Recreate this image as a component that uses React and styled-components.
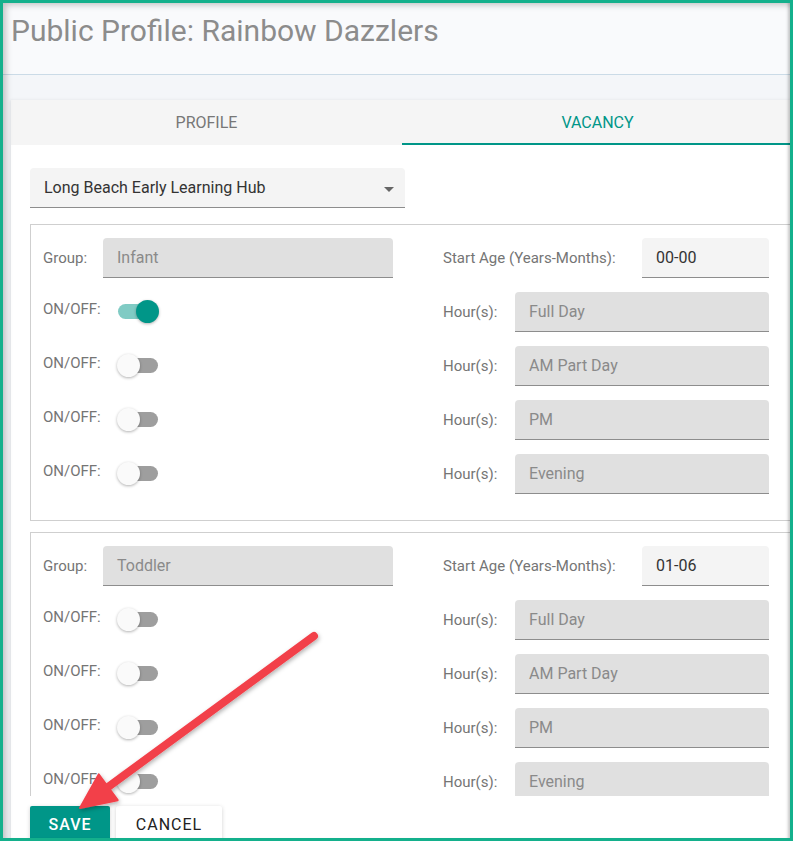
import React from "react";
import styled, { createGlobalStyle } from "styled-components";

const GlobalStyle = createGlobalStyle`
	html, body {
		margin: 0;
		padding: 0;
		background: #ffffff;
	}
	* {
		box-sizing: border-box;
	}
	body {
		font-family: Roboto, "Liberation Sans", Arial, sans-serif;
	}
`;

const Frame = styled.div`
	position: relative;
	width: 793px;
	height: 841px;
	border: 3px solid #14b08c;
	overflow: hidden;
	background: #f4f6f9;

	&::after {
		content: "";
		position: absolute;
		inset: 0;
		pointer-events: none;
		box-shadow: inset 6px 5px 6px -3px rgba(0, 0, 0, 0.22),
			inset -4px 0 3px -2px rgba(0, 0, 0, 0.22);
	}
`;

const Header = styled.header`
	height: 72px;
	padding: 11px 0 0 8px;
	background: #f9fafc;
	border-bottom: 1px solid #cbdbe7;
`;

const Title = styled.h1`
	margin: 0;
	font-size: 30px;
	font-weight: 400;
	color: #8c8c8c;
	line-height: 34px;
	white-space: nowrap;
`;

const Body = styled.div`
	padding: 25px 0 0 8px;
`;

const Card = styled.section`
	width: 782px;
	background: #ffffff;
	box-shadow: -1px 0 3px rgba(0, 0, 0, 0.08);
`;

const Tabs = styled.nav`
	display: grid;
	grid-template-columns: 1fr 1fr;
	height: 45px;
	background: #f5f5f5;
`;

const Tab = styled.div`
	display: flex;
	align-items: center;
	justify-content: center;
	font-size: 16px;
	text-transform: uppercase;
	color: ${(p) => (p.$active ? "#009688" : "#777777")};
	border-bottom: 2px solid ${(p) => (p.$active ? "#009688" : "transparent")};
	padding-top: 2px;
`;

const Scroll = styled.div`
	height: 651px;
	overflow: hidden;
	padding: 23px 0 0 19px;
`;

const Select = styled.div`
	position: relative;
	display: flex;
	align-items: center;
	width: 375px;
	height: 40px;
	padding: 0 14px;
	background: #f4f4f4;
	border-bottom: 1px solid #8d8d8d;
	border-radius: 4px 4px 0 0;
	font-size: 16px;
	color: #333333;

	&::after {
		content: "";
		position: absolute;
		right: 11px;
		top: 19px;
		border-left: 5px solid transparent;
		border-right: 5px solid transparent;
		border-top: 5px solid #666666;
	}
`;

const GroupBox = styled.div`
	width: 800px;
	margin-top: ${(p) => p.$top}px;
	padding: 13px 0 26px 12px;
	border: 1px solid #cfcfcf;
	display: flex;
	flex-direction: column;
	gap: 14px;
`;

const Row = styled.div`
	display: flex;
	gap: 50px;
	height: 40px;
`;

const Cell = styled.div`
	display: flex;
	align-items: ${(p) => (p.$top ? "flex-start" : "center")};
	justify-content: ${(p) => (p.$spread ? "space-between" : "flex-start")};
	width: ${(p) => p.$width}px;
	height: 40px;
`;

const Label = styled.span`
	width: ${(p) => (p.$width ? `${p.$width}px` : "auto")};
	flex-shrink: 0;
	font-size: 15px;
	color: #757575;
	padding-top: ${(p) => (p.$top ? "8px" : "0")};
	white-space: nowrap;
`;

const Field = styled.div`
	display: flex;
	align-items: center;
	width: ${(p) => p.$width}px;
	height: 40px;
	padding: 0 14px;
	background: ${(p) => (p.$disabled ? "#e0e0e0" : "#f4f4f4")};
	color: ${(p) => (p.$disabled ? "#8a8a8a" : "#333333")};
	border-bottom: 1px solid #8d8d8d;
	border-radius: 4px 4px 0 0;
	font-size: 16px;
`;

const SwitchSlot = styled.div`
	padding-top: 12px;
`;

const Switch = styled.div`
	position: relative;
	width: 40px;
	height: 15px;
	margin-left: 15px;
	border-radius: 8px;
	background: ${(p) => (p.$on ? "#80cbc4" : "#9e9e9e")};

	&::after {
		content: "";
		position: absolute;
		top: -4px;
		left: ${(p) => (p.$on ? "18px" : "-1px")};
		width: 23px;
		height: 23px;
		border-radius: 50%;
		background: ${(p) => (p.$on ? "#009688" : "#fafafa")};
		box-shadow: 0 1px 3px rgba(0, 0, 0, 0.3);
	}
`;

const Footer = styled.div`
	display: flex;
	gap: 6px;
	padding: 10px 0 0 19px;
	height: 46px;
`;

const Button = styled.button`
	width: ${(p) => p.$width}px;
	height: 36px;
	border: none;
	border-radius: 2px;
	font-family: Roboto, "Liberation Sans", Arial, sans-serif;
	font-size: 16px;
	font-weight: ${(p) => (p.$primary ? 500 : 400)};
	letter-spacing: 1px;
	text-transform: uppercase;
	background: ${(p) => (p.$primary ? "#009688" : "#ffffff")};
	color: ${(p) => (p.$primary ? "#ffffff" : "#222222")};
	box-shadow: 0 1px 4px rgba(0, 0, 0, 0.18);
	padding: 0;
`;

const Annotation = styled.svg`
	position: absolute;
	left: -3px;
	top: -3px;
	pointer-events: none;
`;

const groups = [
	{ name: "Infant", age: "00-00", first: true },
	{ name: "Toddler", age: "01-06" },
];

const hours = ["Full Day", "AM Part Day", "PM", "Evening"];

const Group = ({ name, age, on, top }) => (
	<GroupBox $top={top}>
		<Row>
			<Cell $width={350}>
				<Label $width={60}>Group:</Label>
				<Field $width={290} $disabled>
					{name}
				</Field>
			</Cell>
			<Cell $width={326} $spread>
				<Label>Start Age (Years-Months):</Label>
				<Field $width={127}>{age}</Field>
			</Cell>
		</Row>
		{hours.map((h, i) => (
			<Row key={h}>
				<Cell $width={350} $top>
					<Label $width={60} $top>
						ON/OFF:
					</Label>
					<SwitchSlot>
						<Switch $on={on && i === 0} />
					</SwitchSlot>
				</Cell>
				<Cell $width={326} $spread>
					<Label>Hour(s):</Label>
					<Field $width={254} $disabled>
						{h}
					</Field>
				</Cell>
			</Row>
		))}
	</GroupBox>
);

const App = () => {
	return (
		<>
			<GlobalStyle />
			<Frame>
				<Header>
					<Title>Public Profile: Rainbow Dazzlers</Title>
				</Header>
				<Body>
					<Card>
						<Tabs>
							<Tab>Profile</Tab>
							<Tab $active>Vacancy</Tab>
						</Tabs>
						<Scroll>
							<Select>Long Beach Early Learning Hub</Select>
							{groups.map((g, i) => (
								<Group
									key={g.name}
									name={g.name}
									age={g.age}
									on={g.first}
									top={i === 0 ? 16 : 11}
								/>
							))}
						</Scroll>
						<Footer>
							<Button $primary $width={80}>
								Save
							</Button>
							<Button $width={106}>Cancel</Button>
						</Footer>
					</Card>
				</Body>
				<Annotation width="793" height="841" viewBox="0 0 793 841">
					<defs>
						<filter id="arrowShadow" x="-20%" y="-20%" width="140%" height="140%">
							<feDropShadow dx="1" dy="2" stdDeviation="2" floodColor="#000" floodOpacity="0.3" />
						</filter>
					</defs>
					<g filter="url(#arrowShadow)" fill="#f2404a" stroke="#f2404a">
						<line x1="314" y1="636" x2="104" y2="790" strokeWidth="8" strokeLinecap="round" />
						<polygon points="80,808 98.7,774.4 117.7,800.2" strokeWidth="2" strokeLinejoin="round" />
					</g>
				</Annotation>
			</Frame>
		</>
	);
};

export default App;
